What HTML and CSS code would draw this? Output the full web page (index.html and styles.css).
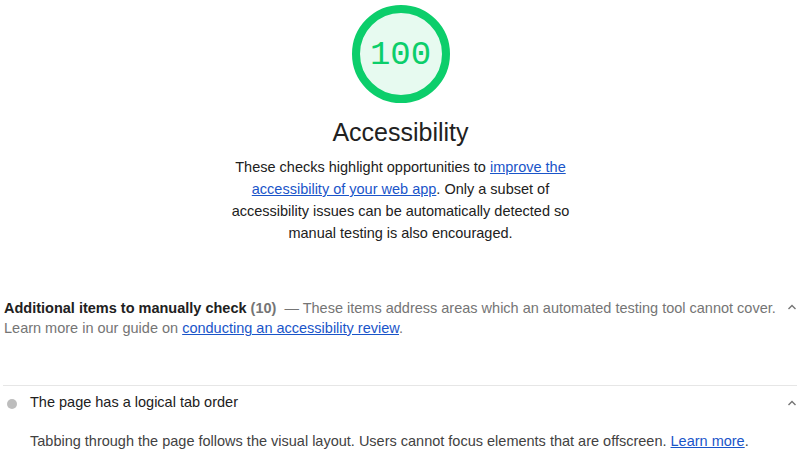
FILE: index.html
```html
<!DOCTYPE html>
<html lang="en">
<head>
    <meta charset="UTF-8">
    <meta name="viewport" content="width=device-width, initial-scale=1.0">
    <title>Accessibility</title>
    <link rel="stylesheet" href="styles.css">
</head>
<body>
    <div class="report">
        <!-- Cabecera de la categoría -->
        <div class="category-header">
            <div class="gauge">
                <span class="gauge-score">100</span>
            </div>
            <h1 class="category-title">Accessibility</h1>
            <p class="category-description">
                These checks highlight opportunities to <a href="#">improve the accessibility of your web app</a>. Only a subset of accessibility issues can be automatically detected so manual testing is also encouraged.
            </p>
        </div>

        <!-- Grupo de auditorías manuales -->
        <div class="audit-group">
            <div class="group-header">
                <p class="group-text"><b class="group-title">Additional items to manually check <span class="item-count">(10)</span></b>&nbsp; — These items address areas which an automated testing tool cannot cover. Learn more in our guide on <a href="#">conducting an accessibility review</a>.</p>
                <svg class="chevron" width="10" height="6" viewBox="0 0 10 6">
                    <polyline points="1.5,5 5,1.5 8.5,5" fill="none" stroke="#757575" stroke-width="1.4"/>
                </svg>
            </div>

            <div class="audit">
                <div class="audit-header">
                    <span class="audit-dot"></span>
                    <span class="audit-title">The page has a logical tab order</span>
                    <svg class="chevron" width="10" height="6" viewBox="0 0 10 6">
                        <polyline points="1.5,5 5,1.5 8.5,5" fill="none" stroke="#757575" stroke-width="1.4"/>
                    </svg>
                </div>
                <p class="audit-description">
                    Tabbing through the page follows the visual layout. Users cannot focus elements that are offscreen. <a href="#">Learn more</a>.
                </p>
            </div>
        </div>
    </div>
</body>
</html>
```

FILE: styles.css
```css
body {
    font-family: "Liberation Sans", Arial, sans-serif;
    font-size: 14.5px;
    color: #212121;
    background-color: #fff;
    margin: 0;
    padding: 0;
}
a {
    color: #1a55c9;
}
.report {
    padding: 0 3px 0 4px;
}
.category-header {
    display: flex;
    flex-direction: column;
    align-items: center;
    text-align: center;
}
.gauge {
    width: 98px;
    height: 98px;
    margin-top: 5px;
    box-sizing: border-box;
    border: 8px solid #0cce6b;
    border-radius: 50%;
    background-color: #e7faf0;
    display: flex;
    align-items: center;
    justify-content: center;
}
.gauge-score {
    font-family: "Liberation Mono", monospace;
    font-size: 34px;
    color: #0cce6b;
    line-height: 1;
    margin-top: 2px;
}
.category-title {
    font-size: 25px;
    font-weight: normal;
    line-height: 32px;
    margin: 13px 0 0;
}
.category-description {
    max-width: 360px;
    line-height: 22px;
    margin: 8px 0 0;
}
.audit-group {
    margin-top: 54px;
}
.group-header {
    display: flex;
    align-items: flex-start;
    gap: 6px;
    line-height: 20px;
}
.group-text {
    flex: 1;
    margin: 0;
    color: #757575;
}
.group-title {
    color: #212121;
}
.item-count {
    color: #757575;
}
.chevron {
    flex-shrink: 0;
    margin-top: 6px;
}
.audit {
    margin-top: 47px;
    margin-left: -1px;
    border-top: 1px solid #e6e6e6;
}
.audit-header {
    display: flex;
    align-items: flex-start;
    line-height: 20px;
    padding-top: 6px;
}
.audit-dot {
    width: 10px;
    height: 10px;
    border-radius: 50%;
    background-color: #bdbdbd;
    margin: 7px 0 0 4px;
    flex-shrink: 0;
}
.audit-title {
    flex: 1;
    margin-left: 13px;
}
.audit-header .chevron {
    margin-top: 8px;
}
.audit-description {
    margin: 19px 0 0 27px;
    line-height: 20px;
    color: #424242;
}
```
